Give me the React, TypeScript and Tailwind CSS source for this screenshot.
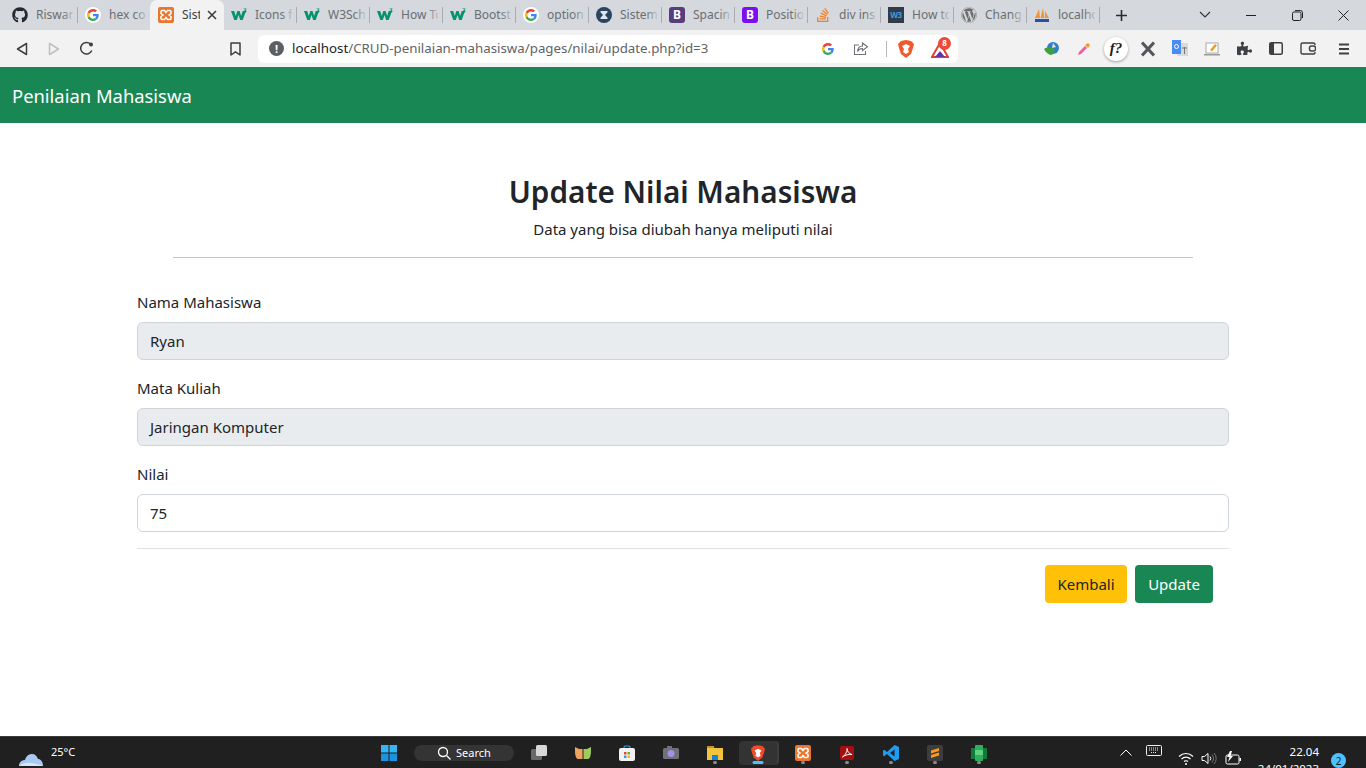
import React from "react";
import { FaGithub, FaWordpress, FaPuzzlePiece, FaStackOverflow } from "react-icons/fa";

const GoogleG = ({ s = 16 }: { s?: number }) => (
  <svg width={s} height={s} viewBox="0 0 48 48">
    <path fill="#EA4335" d="M24 9.5c3.5 0 6.700 1.200 9.200 3.600l6.900-6.900C35.900 2.400 30.500 0 24 0 14.600 0 6.500 5.400 2.600 13.200l8 6.200C12.500 13.600 17.800 9.500 24 9.500z" />
    <path fill="#4285F4" d="M46.900 24.500c0-1.600-.1-3.100-.4-4.500H24v9h12.900c-.6 3-2.200 5.500-4.700 7.200l7.700 6c4.500-4.200 7-10.300 7-17.700z" />
    <path fill="#FBBC05" d="M10.600 28.600c-.5-1.500-.8-3-.8-4.600s.3-3.100.8-4.600l-8-6.200C.9 16.500 0 20.100 0 24s.9 7.500 2.600 10.800l8-6.200z" />
    <path fill="#34A853" d="M24 48c6.500 0 11.900-2.100 15.900-5.800l-7.700-6c-2.200 1.400-4.900 2.300-8.200 2.300-6.200 0-11.500-4.200-13.400-9.800l-8 6.200C6.500 42.600 14.600 48 24 48z" />
  </svg>
);

const GoogleRound = () => (
  <span className="w-4 h-4 rounded-full bg-white flex items-center justify-center">
    <GoogleG s={12} />
  </span>
);

const Xampp = ({ s = 16 }: { s?: number }) => (
  <svg width={s} height={s} viewBox="0 0 16 16">
    <rect width="16" height="16" rx="2" fill="#E8762D" />
    <path d="M4 3.500h2.500L8 5.500l1.500-2H12a1 1 0 0 1 1 1v2L11 8l2 1.500v2a1 1 0 0 1-1 1H9.500L8 10.500l-1.500 2H4a1 1 0 0 1-1-1v-2L5 8 3 6.500v-2a1 1 0 0 1 1-1z" fill="none" stroke="#fff" strokeWidth="1.500" />
  </svg>
);

const W3 = () => (
  <svg width="16" height="16" viewBox="0 0 16 16">
    <path d="M0 4h3.200l1.600 5 1.500-5h2.300l1.500 5 1.600-5H15l-3.300 9H9.200L7.500 8l-1.700 5H3.300z" fill="#04936b" />
    <path d="M12.500 1.500h3v.6l-1.200 1c.8.200 1.200.6 1.200 1.200 0 .8-.8 1.200-1.600 1.200-.6 0-1.200-.2-1.500-.5l.4-.6c.3.200.7.400 1 .4s.7-.1.700-.5-.5-.6-1.100-.6V3l1-.9h-1.900z" fill="#04936b" />
  </svg>
);

const Boot = ({ c }: { c: string }) => (
  <span className="w-4 h-4 rounded-[3px] flex items-center justify-center text-white text-[12px] font-bold leading-none" style={{ background: c }}>B</span>
);

const Hourglass = () => (
  <svg width="16" height="16" viewBox="0 0 16 16">
    <circle cx="8" cy="8" r="8" fill="#2a4463" />
    <path d="M4.500 4h7v1.200L9 8l2.500 2.800V12h-7v-1.200L7 8 4.500 5.200z" fill="#dfe6ee" />
  </svg>
);

const W3b = () => (
  <span className="w-4 h-4 bg-[#323b4a] flex items-center justify-center overflow-hidden text-[8px] font-bold tracking-tighter text-[#3aa0d8] leading-none">W3</span>
);

const Pma = () => (
  <svg width="16" height="16" viewBox="0 0 16 16">
    <path d="M1 11 5 2l1 9zM6.500 11 9 1l1.500 10zM11 11 11 4l4 7z" fill="#f0953a" />
    <rect x="1" y="12" width="14" height="3" fill="#2d4f9e" />
  </svg>
);

const tabs: { t: string; i: React.ReactNode; active?: boolean }[] = [
  { t: "Riswan", i: <FaGithub size={16} color="#24292f" /> },
  { t: "hex color", i: <GoogleRound /> },
  { t: "Sistem", i: <Xampp />, active: true },
  { t: "Icons from", i: <W3 /> },
  { t: "W3Schools", i: <W3 /> },
  { t: "How To", i: <W3 /> },
  { t: "Bootstrap", i: <W3 /> },
  { t: "option", i: <GoogleRound /> },
  { t: "Sistem", i: <Hourglass /> },
  { t: "Spacing", i: <Boot c="#563d7c" /> },
  { t: "Position", i: <Boot c="#7a10f0" /> },
  { t: "div inside", i: <FaStackOverflow size={16} color="#f48024" /> },
  { t: "How to", i: <W3b /> },
  { t: "Change", i: <FaWordpress size={16} color="#6d6d6d" /> },
  { t: "localhost", i: <Pma /> },
];

function Tab({ t, i, active }: { t: string; i: React.ReactNode; active?: boolean }) {
  if (active) {
    return (
      <div className="relative w-[74px] -ml-px h-[30px] bg-[#f2f2f2] rounded-t-[7px] flex items-center pl-[8px] shrink-0">
        <span className="shrink-0 flex">{i}</span>
        <span className="ml-[8px] w-[18px] overflow-hidden whitespace-nowrap text-[12px] text-[#3c4043]">{t}</span>
        <svg className="ml-[7px] shrink-0" width="10" height="10" viewBox="0 0 10 10">
          <path d="M1 1l8 8M9 1l-8 8" stroke="#3c4043" strokeWidth="1.600" />
        </svg>
      </div>
    );
  }
  return (
    <div className="relative w-[73px] h-[30px] flex items-center pl-[7px] shrink-0">
      <span className="shrink-0 flex">{i}</span>
      <span className="ml-[8px] w-[37px] overflow-hidden whitespace-nowrap text-[12px] text-[#6a6e73]">{t}</span>
      <span className="absolute right-[2px] top-0 bottom-0 w-[14px] bg-gradient-to-r from-transparent to-[#d5d8dc]" />
      <span className="absolute right-0 top-[7px] h-[16px] w-px bg-[#a8acb0]" />
    </div>
  );
}

const Field = ({ label, value, disabled }: { label: string; value: string; disabled?: boolean }) => (
  <div className="mb-[16px]">
    <div className="text-[15px] leading-[24px] mb-[8px] text-[#212529]">{label}</div>
    <div className={`h-[38px] rounded-[6px] border border-[#ced4da] px-[12px] flex items-center text-[15px] text-[#212529] ${disabled ? "bg-[#e9ecef]" : "bg-white"}`}>{value}</div>
  </div>
);

const Dot = () => <span className="absolute left-1/2 -translate-x-1/2 bottom-[5px] w-[4px] h-[3px] rounded-full bg-[#8a8a8a]" />;

const TB = ({ children, w = 44, dot }: { children: React.ReactNode; w?: number; dot?: boolean }) => (
  <div className="relative h-[32px] flex items-center justify-center shrink-0" style={{ width: w }}>
    {children}
    {dot && <Dot />}
  </div>
);

export default function App() {
  return (
    <div className="h-screen w-full overflow-hidden flex flex-col bg-white font-['Noto_Sans','Open_Sans',sans-serif]">
      {/* Tab strip */}
      <div className="h-[30px] bg-[#d5d8dc] flex items-center shrink-0 pl-[5px]">
        {tabs.map((x, k) => <Tab key={k} {...x} />)}
        <svg className="ml-[15px] shrink-0" width="13" height="13" viewBox="0 0 13 13">
          <path d="M6.500 1v11M1 6.500h11" stroke="#2b2b2b" strokeWidth="1.600" />
        </svg>
        <div className="ml-auto flex items-center shrink-0">
          <svg width="46" height="12" viewBox="0 0 46 12"><path d="M18 3l5 5 5-5" fill="none" stroke="#333" strokeWidth="1.100" /></svg>
          <div className="w-[46px] flex justify-center"><span className="w-[10px] h-px bg-[#222]" /></div>
          <div className="w-[46px] flex justify-center">
            <svg width="11" height="11" viewBox="0 0 11 11"><rect x=".5" y="2" width="8.500" height="8.500" rx="1.500" fill="none" stroke="#222" /><path d="M3 .6h5.500a2 2 0 0 1 2 2V8" fill="none" stroke="#222" /></svg>
          </div>
          <div className="w-[46px] flex justify-center">
            <svg width="11" height="11" viewBox="0 0 11 11"><path d="M.5.500l10 10M10.500.500l-10 10" stroke="#222" strokeWidth="1" /></svg>
          </div>
        </div>
      </div>

      {/* Toolbar */}
      <div className="h-[37px] bg-[#f2f2f2] flex items-center shrink-0 relative">
        <div className="w-[258px] flex items-center shrink-0">
          <svg className="ml-[16px]" width="12" height="14" viewBox="0 0 12 14"><path d="M10.500 1.500v11L1.500 7z" fill="none" stroke="#3c4043" strokeWidth="1.500" strokeLinejoin="round" /></svg>
          <svg className="ml-[20px]" width="12" height="14" viewBox="0 0 12 14"><path d="M1.500 1.500v11l9-5.500z" fill="none" stroke="#bdbfc2" strokeWidth="1.500" strokeLinejoin="round" /></svg>
          <svg className="ml-[19px]" width="15" height="15" viewBox="0 0 15 15"><path d="M12.800 9.500A5.800 5.800 0 1 1 11.500 3" fill="none" stroke="#3c4043" strokeWidth="1.500" /><circle cx="12" cy="3.500" r="2" fill="#3c4043" /></svg>
          <svg className="ml-[136px]" width="11" height="14" viewBox="0 0 11 14"><path d="M1 1h9v12L5.500 9.800 1 13z" fill="none" stroke="#3c4043" strokeWidth="1.500" strokeLinejoin="round" /></svg>
        </div>
        <div className="h-[28px] w-[700px] bg-white rounded-[6px] flex items-center shrink-0">
          <span className="ml-[11px] w-[15px] h-[15px] rounded-full bg-[#5b5e63] flex items-center justify-center text-white text-[11px] font-bold leading-none">!</span>
          <span className="ml-[8px] text-[13.300px] whitespace-nowrap"><span className="text-[#202124]">localhost</span><span className="text-[#5f6368]">/CRUD-penilaian-mahasiswa/pages/nilai/update.php?id=3</span></span>
          <div className="ml-auto flex items-center">
            <GoogleG s={12} />
            <svg className="ml-[19px]" width="16" height="14" viewBox="0 0 16 14"><path d="M6 3H1.500v9.500h11V9M9.500 1l5 3.800-5 3.800V6.500C7 6.500 5.500 7.500 4.500 9.500c.2-3 2-5.500 5-5.500z" fill="none" stroke="#6f7276" strokeWidth="1.100" /></svg>
            <span className="ml-[17px] w-px h-[16px] bg-[#b5b7ba]" />
            <svg className="ml-[11px]" width="16" height="18" viewBox="0 0 16 18"><path d="M8 0l5 1 3 3-1 4-2 6-5 4-5-4-2-6-1-4 3-3z" fill="#f1592a" /><path d="M4 6l4-2 4 2-2 3 1 3-3 2-3-2 1-3z" fill="#fff" /></svg>
            <div className="relative ml-[17px] mr-[9px] w-[18px] h-[18px]">
              <svg width="18" height="18" viewBox="0 0 18 18" className="absolute left-0 top-[1px]"><path d="M9 2l8 14H1z" fill="none" stroke="#e2402f" strokeWidth="2" /><path d="M9 10l5 6H4z" fill="#6b2fa8" /></svg>
              <span className="absolute left-[7px] -top-[3px] w-[13px] h-[13px] rounded-full bg-[#ee4a37] text-white text-[8px] font-bold flex items-center justify-center leading-none">8</span>
            </div>
          </div>
        </div>
        <div className="flex-1 flex items-center relative">
          <svg className="absolute left-[85px]" width="17" height="15" viewBox="0 0 17 15"><circle cx="10" cy="7" r="6" fill="#2f7fcb" /><path d="M1 8c3-2 8-2 11 1l-3 5c-3 0-6-2-8-6z" fill="#3fa13a" /><path d="M10 2l3 4-4 1z" fill="#e8e4d0" /></svg>
          <svg className="absolute left-[119px]" width="14" height="14" viewBox="0 0 14 14"><path d="M1 13l1-3 6-6 2 2-6 6z" fill="#ee5fa0" /><path d="M8 3l3-2 2 2-2 3z" fill="#f29a25" /></svg>
          <span className="absolute left-[146px] w-[24px] h-[24px] rounded-full bg-white shadow-[0_1px_3px_rgba(0,0,0,0.35)] flex items-center justify-center text-[15px] italic font-['Liberation_Serif',serif] font-bold text-[#222]">f?</span>
          <svg className="absolute left-[182px]" width="16" height="16" viewBox="0 0 16 16"><path d="M2 1.500l12 13M14 1.500L2 14.500" stroke="#54585d" strokeWidth="3.200" /></svg>
          <svg className="absolute left-[214px]" width="16" height="17" viewBox="0 0 16 17"><rect x="5" y="3" width="11" height="13" fill="#d8d9db" /><path d="M0 0h9v14H0z" fill="#4a8af4" /><circle cx="4.500" cy="6.500" r="2" fill="none" stroke="#fff" /><path d="M10 8h5M12.500 7v7" stroke="#777" /></svg>
          <svg className="absolute left-[246px]" width="16" height="14" viewBox="0 0 16 14"><rect x="2" y="1" width="12" height="10" fill="#fff" stroke="#a9a9a9" /><path d="M0 12h16v1.500H0z" fill="#9a9a9a" /><path d="M6 8l5-6 2 1.500-5 6z" fill="#f09a27" /></svg>
          <span className="absolute left-[279px] flex"><FaPuzzlePiece size={15} color="#3c4043" /></span>
          <svg className="absolute left-[311px]" width="14" height="13" viewBox="0 0 14 13"><rect x=".75" y=".75" width="12.500" height="11.500" rx="1.500" fill="none" stroke="#3c4043" strokeWidth="1.500" /><rect x="1" y="1" width="4" height="11" fill="#3c4043" /></svg>
          <svg className="absolute left-[342px]" width="16" height="13" viewBox="0 0 16 13"><path d="M15 3V2.500A1.500 1.500 0 0 0 13.500 1h-11A1.500 1.500 0 0 0 1 2.500v8A1.500 1.500 0 0 0 2.500 12h11a1.500 1.500 0 0 0 1.500-1.500V10" fill="none" stroke="#3c4043" strokeWidth="1.400" /><rect x="9.500" y="4" width="6" height="5" rx="2" fill="none" stroke="#3c4043" strokeWidth="1.400" /></svg>
          <svg className="absolute left-[381px]" width="10" height="12" viewBox="0 0 10 12"><path d="M0 1.500h10M0 6h10M0 10.500h10" stroke="#3c4043" strokeWidth="1.800" /></svg>
        </div>
      </div>

      {/* Navbar */}
      <div className="h-[56px] bg-[#198754] flex items-center pl-[12px] pt-[2px] shrink-0">
        <span className="text-white text-[18.400px]">Penilaian Mahasiswa</span>
      </div>

      {/* Page */}
      <div className="flex-1 min-h-0">
        <div className="mt-[49px] text-center">
          <h1 className="text-[29.700px] font-semibold leading-[40px] text-[#212529]">Update Nilai Mahasiswa</h1>
          <p className="mt-[7px] text-[15px] leading-[20px] text-[#212529]">Data yang bisa diubah hanya meliputi nilai</p>
        </div>
        <div className="w-[1020px] h-px bg-[#c4c6c8] mx-auto mt-[18px]" />
        <div className="w-[1092px] mx-auto mt-[32px]">
          <Field label="Nama Mahasiswa" value="Ryan" disabled />
          <Field label="Mata Kuliah" value="Jaringan Komputer" disabled />
          <Field label="Nilai" value="75" />
          <div className="h-px bg-[#dee2e6]" />
          <div className="flex justify-end gap-[8px] pr-[16px] mt-[16px]">
            <button className="w-[82px] h-[38px] rounded-[4px] bg-[#ffc107] text-[#212529] text-[15px]">Kembali</button>
            <button className="w-[78px] h-[38px] rounded-[4px] bg-[#198754] text-white text-[15px]">Update</button>
          </div>
        </div>
      </div>

      {/* Taskbar */}
      <div className="h-[32px] bg-[#202020] border-t border-t-[#3a3a3a] flex items-center shrink-0 relative overflow-hidden">
        <div className="w-[368px] flex items-center shrink-0 h-full">
          <svg className="ml-[18px] mt-[12px]" width="26" height="15" viewBox="0 0 26 15"><path d="M1 15c0-4 3-6 6-6 1-4 4-6 7-6s5 2 6 5c3 0 5 3 5 7z" fill="#a9c8f2" /><path d="M1 15c3-3 8-4 12-3s9 1 12 3z" fill="#d9e6fa" /></svg>
          <span className="ml-[7px] text-[11px] text-white">25°C</span>
        </div>
        <TB w={42}>
          <svg width="16" height="16" viewBox="0 0 16 16"><rect width="7.500" height="7.500" fill="#35b5f4" /><rect x="8.500" width="7.500" height="7.500" fill="#35b5f4" /><rect y="8.500" width="7.500" height="7.500" fill="#1b93e0" /><rect x="8.500" y="8.500" width="7.500" height="7.500" fill="#1b93e0" /></svg>
        </TB>
        <div className="ml-[4px] mr-[3px] w-[100px] h-[16px] rounded-full bg-[#343434] flex items-center justify-center shrink-0">
          <svg width="14" height="14" viewBox="0 0 14 14"><circle cx="6" cy="6" r="4.500" fill="none" stroke="#fff" strokeWidth="1.300" /><path d="M9.500 9.500l4 4" stroke="#fff" strokeWidth="1.300" /></svg>
          <span className="ml-[5px] pt-[2px] text-[11px] text-white">Search</span>
        </div>
        <TB>
          <svg width="16" height="15" viewBox="0 0 16 15"><rect y="4" width="11" height="11" rx="1.500" fill="#6a6a6a" /><rect x="5" width="11" height="11" rx="1.500" fill="#d8d8d8" /></svg>
        </TB>
        <TB>
          <svg width="16" height="12" viewBox="0 0 16 12"><path d="M0 0l4 2h3.500v10H3C1 12 0 8 0 4z" fill="#f0a35e" /><path d="M16 0l-4 2H8.500v10H13c2 0 3-4 3-8z" fill="#9fca5e" /></svg>
        </TB>
        <TB>
          <svg width="16" height="16" viewBox="0 0 16 16"><path d="M5 4V2a2 2 0 0 1 2-1h2a2 2 0 0 1 2 1v2" fill="none" stroke="#2f9fe0" strokeWidth="1.200" /><rect y="3" width="16" height="13" rx="2" fill="#f2f2f2" /><rect x="5" y="7" width="2.500" height="2.500" fill="#e64a2e" /><rect x="8.500" y="7" width="2.500" height="2.500" fill="#6bb52b" /><rect x="5" y="10.500" width="2.500" height="2.500" fill="#2f9fe0" /><rect x="8.500" y="10.500" width="2.500" height="2.500" fill="#f5b91f" /></svg>
        </TB>
        <TB>
          <svg width="16" height="13" viewBox="0 0 16 13"><rect y="2" width="16" height="11" rx="1.500" fill="#6d7278" /><rect x="4" width="5" height="3" fill="#6d7278" /><circle cx="8" cy="7.500" r="3.500" fill="#a48ee8" /></svg>
        </TB>
        <TB dot>
          <svg width="16" height="15" viewBox="0 0 16 15"><path d="M0 1h6l1.500 2H16v12H0z" fill="#f3c33c" /><rect x="0" y="1" width="7" height="2" fill="#c8922a" /><rect x="5" y="10" width="6" height="5" fill="#1d7fd0" /></svg>
        </TB>
        <div className="relative w-[40px] h-[24px] ml-[2px] mr-[2px] rounded-[4px] bg-[#333333] border-r-2 border-r-[#3e3e3e] flex items-center justify-center shrink-0">
          <svg width="14" height="16" viewBox="0 0 16 18"><path d="M8 0l5 1 3 3-1 4-2 6-5 4-5-4-2-6-1-4 3-3z" fill="#f1492a" /><path d="M4 6l4-2 4 2-2 3 1 3-3 2-3-2 1-3z" fill="#fff" /></svg>
          <span className="absolute bottom-[1px] left-1/2 -translate-x-1/2 w-[11px] h-[3px] rounded-full bg-[#4cc2ff]" />
        </div>
        <TB dot><Xampp /></TB>
        <TB dot>
          <svg width="14" height="14" viewBox="0 0 14 14"><rect width="14" height="14" rx="2" fill="#a50f0f" /><path d="M2.500 11c3-2 5-6 4.500-8.500C7 5 9 8 12 8.500 9 8 5 9 2.500 11z" fill="none" stroke="#fff" strokeWidth="1" /></svg>
        </TB>
        <TB dot>
          <svg width="16" height="16" viewBox="0 0 16 16"><path d="M11.500 0L16 2v12l-4.500 2L4 9l-2.800 2.200L0 10.500v-5l1.200-.7L4 7zM11.500 4.500L7 8l4.500 3.500z" fill="#1f9cf0" /></svg>
        </TB>
        <TB dot>
          <span className="w-[16px] h-[16px] bg-[#3d3d3d] rounded-[2px] flex items-center justify-center">
            <svg width="10" height="12" viewBox="0 0 10 12"><path d="M9 1L1 3.500v3l8-2.500M1 11l8-2.500v-3L1 8z" fill="#f79a1f" /></svg>
          </span>
        </TB>
        <TB dot>
          <svg width="16" height="16" viewBox="0 0 16 16"><rect x="0" y="3" width="16" height="11" fill="#0f7b3b" /><rect x="4" y="0" width="8" height="16" rx="1" fill="#2fae5e" /><rect x="4" y="5" width="8" height="5" fill="#5fcf80" /></svg>
        </TB>
        <div className="ml-auto relative h-full flex items-center shrink-0 w-[260px]">
          <svg className="absolute left-[14px] top-[12px]" width="12" height="7" viewBox="0 0 12 7"><path d="M.5 6.500L6 1l5.500 5.500" fill="none" stroke="#fff" strokeWidth="1" /></svg>
          <svg className="absolute left-[40px] top-[8px]" width="16" height="11" viewBox="0 0 16 11"><rect x=".5" y=".5" width="15" height="10" rx="1" fill="none" stroke="#eee" /><path d="M3 3h10M3 5h10M5 7.500h6" stroke="#eee" strokeDasharray="1 1" /></svg>
          <svg className="absolute left-[72px] top-[15px]" width="16" height="13" viewBox="0 0 16 13"><path d="M1 4.500c4-4 10-4 14 0M3.500 7c2.500-2.500 6.500-2.500 9 0M6 9.500c1-1 3-1 4 0" fill="none" stroke="#fff" strokeWidth="1.200" /><circle cx="8" cy="12" r="1" fill="#fff" /></svg>
          <svg className="absolute left-[95px] top-[15px]" width="16" height="13" viewBox="0 0 16 13"><path d="M1 4.500h2.500L7 1.500v10l-3.500-3H1z" fill="none" stroke="#fff" /><path d="M9 4.500a3 3 0 0 1 0 4" fill="none" stroke="#fff" /><path d="M11 2.500a6 6 0 0 1 0 8M13 1a8 8 0 0 1 0 11" fill="none" stroke="#777" /></svg>
          <svg className="absolute left-[119px] top-[14px]" width="17" height="14" viewBox="0 0 17 14"><rect x="1" y="4" width="13" height="9" rx="1.500" fill="none" stroke="#fff" /><rect x="14.500" y="7" width="1.500" height="3" fill="#fff" /><path d="M5 0L2 6h2.500L3 11l5-6H5.500L7 0z" fill="#fff" /></svg>
          <div className="absolute right-[47px] top-[6px] text-right text-[11.500px] leading-[17px] text-white whitespace-nowrap">
            <div>22.04</div>
            <div>24/01/2023</div>
          </div>
          <span className="absolute right-[20px] top-[16px] w-[15px] h-[15px] rounded-full bg-[#4cc2ff] text-[#1a1a1a] text-[10px] flex items-center justify-center leading-none">2</span>
        </div>
      </div>
    </div>
  );
}
